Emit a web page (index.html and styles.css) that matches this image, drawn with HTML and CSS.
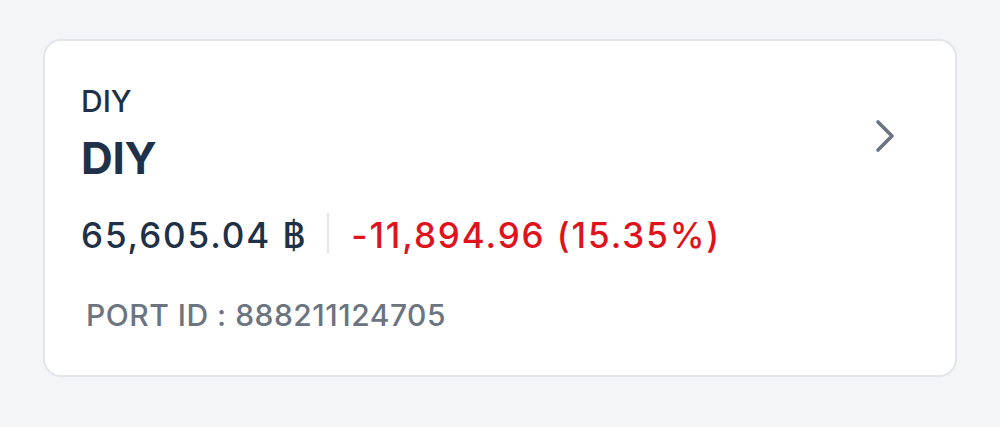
FILE: index.html
```html
<!DOCTYPE html>
<html lang="en">
<head>
  <meta charset="UTF-8" />
  <meta name="viewport" content="width=device-width, initial-scale=1" />
  <title>Portfolio</title>
  <link rel="stylesheet" href="styles.css">
</head>
<body>
  <div class="page">
    <a class="port-card" href="#">
      <div class="port-info">
        <div class="port-type">DIY</div>
        <div class="port-name">DIY</div>
        <div class="port-values">
          <span class="amount">65,605.04 ฿</span>
          <span class="divider"></span>
          <span class="change">-11,894.96 (15.35%)</span>
        </div>
        <div class="port-id">PORT ID : 888211124705</div>
      </div>
      <svg class="chevron" width="22" height="36" viewBox="0 0 22 36">
        <path d="M4 4 L18 18 L4 32" fill="none" stroke="#6b7482" stroke-width="3.6" stroke-linecap="round" stroke-linejoin="round"/>
      </svg>
    </a>
  </div>
</body>
</html>
```

FILE: styles.css
```css
:root {
  --navy: #1e3148;
  --grey: #6b7480;
  --red: #e0121b;
}
* {
  margin: 0;
  padding: 0;
  box-sizing: border-box;
}
html, body {
  font-family: 'Inter', 'Roboto', sans-serif;
  background-color: #f4f5f7;
  color: var(--navy);
}
.page {
  padding: 39px 43px;
}
.port-card {
  display: flex;
  justify-content: space-between;
  align-items: flex-start;
  background: white;
  border: 2px solid #e3e5e9;
  border-radius: 18px;
  padding: 42px 59px 0 36px;
  height: 338px;
  text-decoration: none;
  color: inherit;
}
.port-type {
  font-size: 30px;
  font-weight: 500;
  line-height: 36px;
}
.port-name {
  font-size: 44px;
  font-weight: 700;
  line-height: 52px;
  letter-spacing: -0.3px;
  margin-top: 13px;
}
.port-values {
  display: flex;
  align-items: center;
  margin-top: 29px;
  font-size: 35px;
  font-weight: 500;
  line-height: 44px;
  letter-spacing: 1.9px;
}
.divider {
  width: 2px;
  height: 40px;
  background: #e4e4e4;
  margin: 0 22px 4px 20px;
}
.change {
  color: var(--red);
}
.port-id {
  margin-top: 40px;
  margin-left: 5px;
  font-size: 30px;
  font-weight: 500;
  line-height: 36px;
  letter-spacing: 0.5px;
  color: var(--grey);
}
.chevron {
  margin-top: 35px;
}
```
